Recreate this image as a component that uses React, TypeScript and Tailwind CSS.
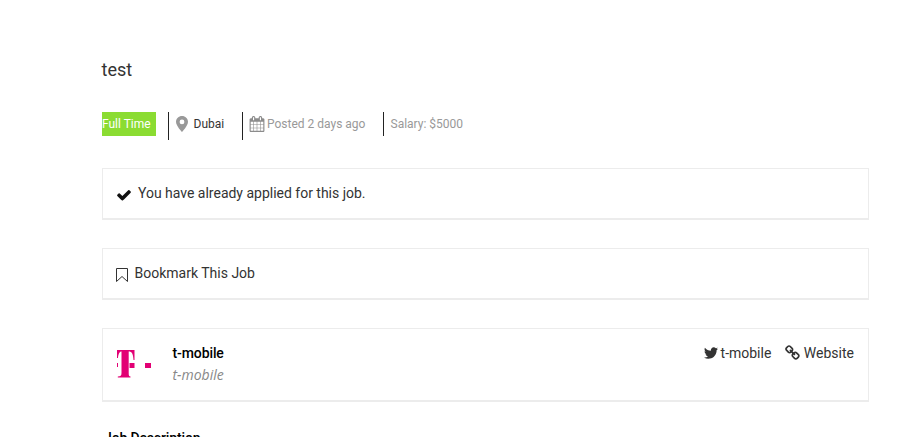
import type { ReactNode } from "react";

function Glyph({ d, className }: { d: string; className: string }) {
  return (
    <svg viewBox="0 0 1792 1792" fill="currentColor" className={`shrink-0 ${className}`}>
      <path d={d} />
    </svg>
  );
}

const CHECK =
  "M1671 566q0 40-28 68l-724 724-136 136q-28 28-68 28t-68-28l-136-136-362-362q-28-28-28-68t28-68l136-136q28-28 68-28t68 28l294 295 656-657q28-28 68-28t68 28l136 136q28 28 28 68z";
const LINK =
  "M1456 1216q0-40-28-68l-208-208q-28-28-68-28-42 0-72 32 3 3 19 18.5t21.5 21.5 15 19 13 25.5 3.5 27.5q0 40-28 68t-68 28q-15 0-27.5-3.5t-25.5-13-19-15-21.5-21.5-18.5-19q-33 31-33 73 0 40 28 68l206 207q27 27 68 27 40 0 68-26l147-146q28-28 28-67zm-703-705q0-40-28-68l-206-207q-28-28-68-28-39 0-68 27l-147 146q-28 28-28 67 0 40 28 68l208 208q27 27 68 27 42 0 72-31-3-3-19-18.5t-21.5-21.5-15-19-13-25.5-3.5-27.5q0-40 28-68t68-28q15 0 27.5 3.5t25.5 13 19 15 21.5 21.5 18.5 19q33-31 33-73zm895 705q0 120-85 203l-147 146q-83 83-203 83-121 0-204-85l-206-207q-83-83-83-203 0-123 88-209l-88-88q-86 88-208 88-120 0-204-84l-208-208q-84-84-84-204t85-203l147-146q83-83 203-83 121 0 204 85l206 207q83 83 83 203 0 123-88 209l88 88q86-88 208-88 120 0 204 84l208 208q84 84 84 204z";
const TWITTER =
  "M1684 408q-67 98-162 167 1 14 1 42 0 130-38 259.5t-115.5 248.5-184.5 210.5-258 146-323 54.5q-271 0-496-145 35 4 78 4 225 0 401-138-105-2-188-64.5t-114-159.5q33 5 61 5 43 0 85-11-112-23-185.5-111.5t-73.5-205.5v-4q68 38 146 41-66-44-105-115t-39-154q0-88 44-163 121 149 294.5 238.5t371.5 99.5q-8-38-8-74 0-134 94.5-228.5t228.5-94.5q140 0 236 102 109-21 205-78-37 115-142 178 93-10 186-50z";
const CALENDAR =
  "M192 1664h288v-288h-288v288zm352 0h320v-288h-320v288zm-352-352h288v-320h-288v320zm352 0h320v-320h-320v320zm-352-384h288v-288h-288v288zm736 736h320v-288h-320v288zm-384-736h320v-288h-320v288zm768 736h288v-288h-288v288zm-384-352h320v-320h-320v320zm-352-864v-288q0-13-9.5-22.5t-22.5-9.5h-64q-13 0-22.5 9.5t-9.5 22.5v288q0 13 9.5 22.5t22.5 9.5h64q13 0 22.5-9.5t9.5-22.5zm736 864h288v-320h-288v320zm-384-384h320v-288h-320v288zm384 0h288v-288h-288v288zm32-480v-288q0-13-9.5-22.5t-22.5-9.5h-64q-13 0-22.5 9.5t-9.5 22.5v288q0 13 9.5 22.5t22.5 9.5h64q13 0 22.5-9.5t9.5-22.5zm384-64v1280q0 52-38 90t-90 38h-1408q-52 0-90-38t-38-90v-1280q0-52 38-90t90-38h128v-96q0-66 47-113t113-47h64q66 0 113 47t47 113v96h384v-96q0-66 47-113t113-47h64q66 0 113 47t47 113v96h128q52 0 90 38t38 90z";

function Card({ children, className }: { children: ReactNode; className: string }) {
  return (
    <section className={`flex border border-b-2 border-[#ececec] pl-[13px] pr-[14px] ${className}`}>
      {children}
    </section>
  );
}

function MetaBar() {
  return (
    <div className="mt-[30px] flex h-7 items-start text-[12px] leading-6 text-[#999]">
      <span className="h-6 w-[54px] bg-[#8bdc32] text-white">Full Time</span>
      <span className="ml-3 flex h-7 w-[74px] border-l border-[#222] pl-[6.500px] text-[#333]">
        <svg viewBox="0 0 12 16" className="mt-1 h-4 w-3 shrink-0 text-[#999]" fill="currentColor">
          <path
            fillRule="evenodd"
            d="M6 0C2.7 0 0 2.6 0 5.8 0 10 6 16 6 16s6-6 6-10.200C12 2.600 9.300 0 6 0Zm0 3.500a2.400 2.400 0 1 1 0 4.800 2.400 2.400 0 0 1 0-4.800Z"
          />
        </svg>
        <span className="ml-[6px]">Dubai</span>
      </span>
      <span className="flex h-7 w-[141px] border-l border-[#222] pl-[5.500px]">
        <Glyph d={CALENDAR} className="mt-1 size-4 text-[#8c8c8c]" />
        <span className="ml-[2.500px] whitespace-nowrap">Posted 2 days ago</span>
      </span>
      <span className="h-6 border-l border-[#222] pl-[6.500px]">Salary: $5000</span>
    </div>
  );
}

export default function App() {
  return (
    <main className="h-[437px] w-[914px] overflow-hidden bg-white pl-[102px] pr-[45px] pt-[58px] font-['Roboto',sans-serif] text-[14px] leading-6 text-[#333]">
      <h1 className="-ml-[0.500px] text-[18px] leading-6">test</h1>
      <MetaBar />

      <Card className="mt-7 h-[52px] pt-3">
        <Glyph d={CHECK} className="mt-[6px] size-4 text-[#111]" />
        <span className="ml-[6px] tracking-[-0.010px]">You have already applied for this job.</span>
      </Card>

      <Card className="mt-7 h-[52px] pt-3">
        <svg viewBox="0 0 12 14" className="mt-[7px] h-[14px] w-3 shrink-0" fill="none" stroke="currentColor">
          <path d="M.5.500h11v13L6 8.500l-5.500 5Z" />
        </svg>
        <span className="ml-[6.500px]">Bookmark This Job</span>
      </Card>

      <Card className="mt-7 h-[74px] pt-3">
        <svg viewBox="0 0 36 30" className="ml-px mt-2 h-[30px] w-9 shrink-0" fill="#e20074">
          <path d="M0 1h17.500v10h-1C16.200 5 15 2.500 11.700 2.500V24c0 2.700.3 3.300 1.800 3.500v1H.8v-1c2.700-.2 3.700-.8 3.700-3.500V2.500C2.500 2.500 1.300 5 1 9H0Z" />
          <path d="M0 14h1v4H0zM12.500 14h5v5h-5zM28 14h6v5h-6z" />
        </svg>
        <div className="ml-[19.500px] leading-[21px]">
          <p className="mt-[2px] font-medium tracking-[-0.100px] text-black">t-mobile</p>
          <p className="font-['Open_Sans',sans-serif] text-[14px] italic text-[#888]">t-mobile</p>
        </div>
        <div className="ml-auto flex">
          <Glyph d={TWITTER} className="mt-1 size-4" />
          <span className="ml-[2px]">t-mobile</span>
          <Glyph d={LINK} className="ml-[13.500px] mt-1 size-4" />
          <span className="ml-[3px]">Website</span>
        </div>
      </Card>

      <h2 className="mt-6 pl-[2px] text-[14px] font-medium leading-6 tracking-[-0.150px] text-black">Job Description</h2>
    </main>
  );
}
